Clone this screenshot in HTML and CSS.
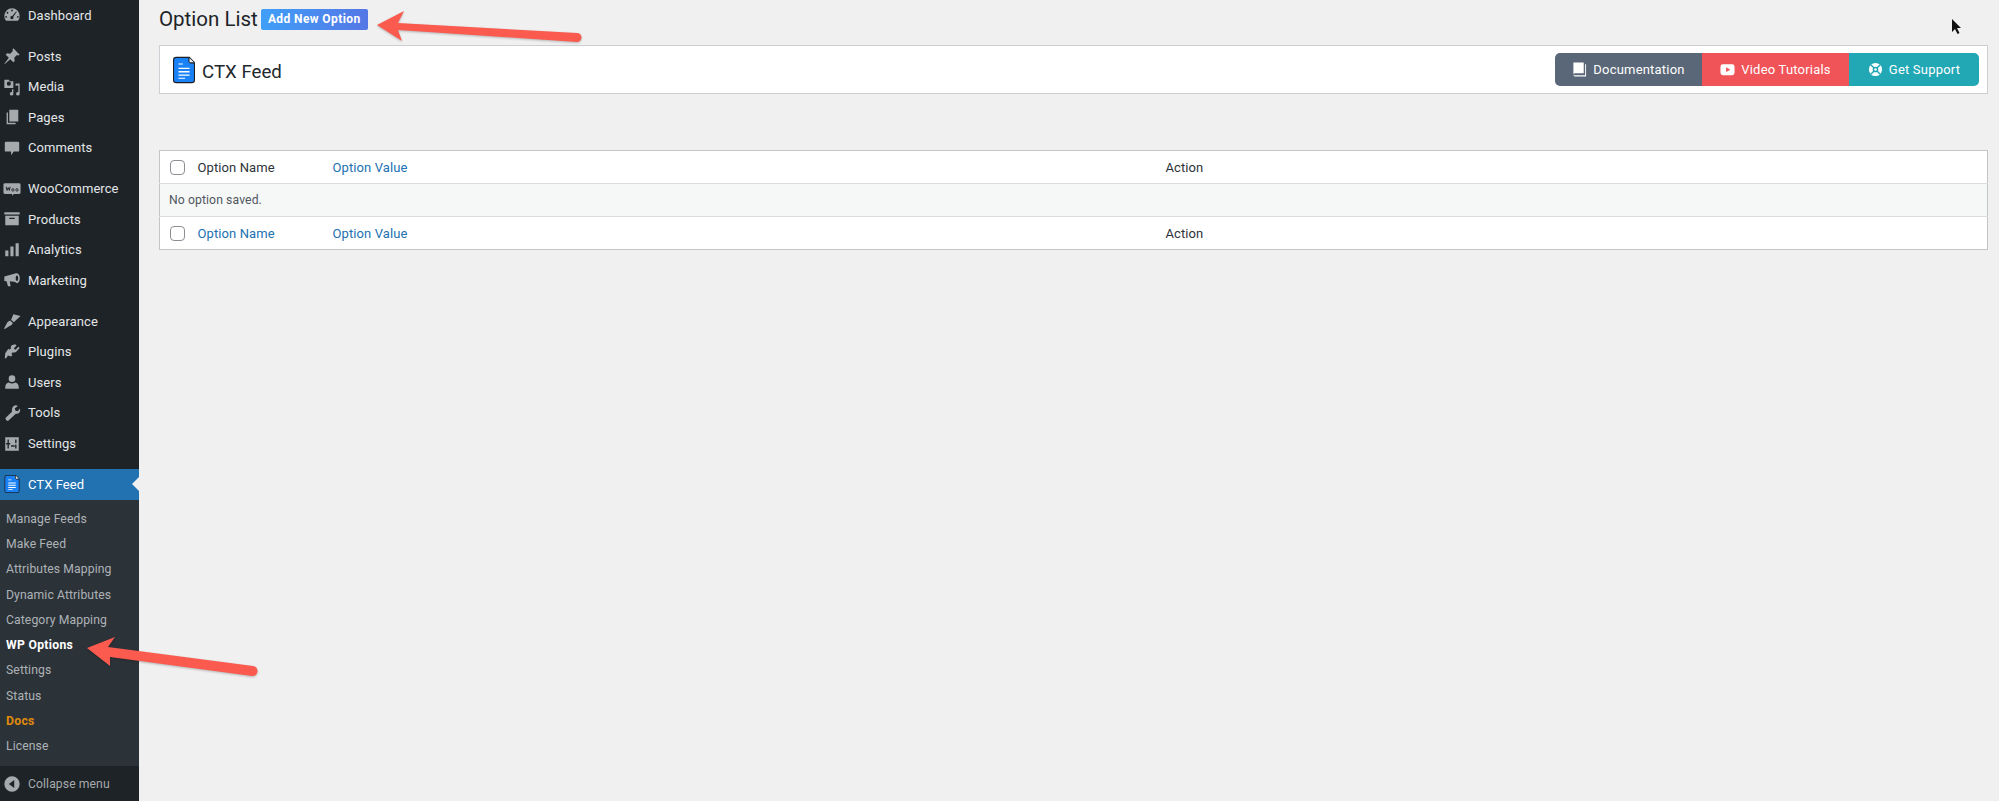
FILE: index.html
```html
<!DOCTYPE html>
<html lang="en">
<head>
<meta charset="utf-8">
<title>Option List</title>
<link rel="stylesheet" href="styles.css">
</head>
<body>
<div class="page">
  <nav class="sidebar">
    <ul class="menu">
      <li class="item"><svg class="ico" viewBox="0 0 20 20"><path fill-rule="evenodd" d="M10 2.500a8.500 8.500 0 0 0-8.500 8.500c0 2 .7 3.900 1.900 5.300h13.200A8.400 8.400 0 0 0 18.500 11 8.500 8.500 0 0 0 10 2.500zm0 1.500a1 1 0 1 1 0 2 1 1 0 0 1 0-2zM5 6.500a1 1 0 1 1 0 2 1 1 0 0 1 0-2zm9.500-.5.800.5-3.800 5.500a1.800 1.800 0 1 1-1.200-.9zM3.500 11a1 1 0 1 1 0 2 1 1 0 0 1 0-2zm13 0a1 1 0 1 1 0 2 1 1 0 0 1 0-2z"/></svg>Dashboard</li>
      <li class="item sep"><svg class="ico" viewBox="0 0 20 20"><path d="M11.500 1.500 18.500 8.500l-1.500 1-1.500-.5-3 3 .5 3.500-1.500 1.500-3.500-3.500L2 19l-.5-.5 5-6.500L3 8.500 4.500 7 8 7.500l3-3-.5-1.500z"/></svg>Posts</li>
      <li class="item"><svg class="ico" viewBox="0 0 20 20"><path fill-rule="evenodd" d="M1.500 2h5l1 1.500h4V11h-10zm5 2a2.300 2.300 0 1 0 0 4.600 2.300 2.300 0 0 0 0-4.600zM18.500 6v11.500a2 2 0 1 1-1.500-1.900V8l-3 .8V6zM11.500 12.500v5a2 2 0 1 1-1.500-1.900v-3.100z"/></svg>Media</li>
      <li class="item"><svg class="ico" viewBox="0 0 20 20"><path d="M7 2h10v13H7zM4 5h1.500v11.500H14V18H4z"/></svg>Pages</li>
      <li class="item"><svg class="ico" viewBox="0 0 20 20"><path d="M3 3h14a1 1 0 0 1 1 1v9a1 1 0 0 1-1 1h-5l-3 4v-4H3a1 1 0 0 1-1-1V4a1 1 0 0 1 1-1z"/></svg>Comments</li>
      <li class="item sep"><svg class="ico" viewBox="0 0 20 20"><path d="M2 3.500h16a1.500 1.500 0 0 1 1.500 1.500v9a1.500 1.500 0 0 1-1.500 1.500h-6l-1.500 2-.5-2H2A1.500 1.500 0 0 1 .5 14V5A1.500 1.500 0 0 1 2 3.500z"/><path class="woo-mark" d="M3.500 7.500l1 4 1.300-3 1.200 3 1-4M11 9.500a1.100 1.500 0 1 1-.01 0M15.500 9.500a1.100 1.500 0 1 1-.01 0"/></svg>WooCommerce</li>
      <li class="item"><svg class="ico" viewBox="0 0 20 20"><path fill-rule="evenodd" d="M1.500 2.500h17v2.500h-17zM2.500 6.500h15V17h-15zm4.500 2V10h6V8.500z"/></svg>Products</li>
      <li class="item"><svg class="ico" viewBox="0 0 20 20"><path d="M2.500 10.500h3.500V17H2.500zM8.200 6h3.500v11H8.200zM14 2.500h3.500V17H14z"/></svg>Analytics</li>
      <li class="item"><svg class="ico" viewBox="0 0 20 20"><path fill-rule="evenodd" d="M15.500 2.500c1.700 0 3.200 2.500 3.200 5.500s-1.500 5.500-3.200 5.500c-.7 0-1.500-.5-2-1.300L7.500 11.500l1 5.500H5.500L4 11.300 1.500 11V6l12-3.200c.5-.2 1.200-.3 2-.3zm0 2.500c-.8 0-1.400 1.300-1.400 3s.6 3 1.400 3 1.400-1.300 1.400-3-.6-3-1.400-3z"/></svg>Marketing</li>
      <li class="item sep"><svg class="ico" viewBox="0 0 20 20"><path d="M11.500 2.500l8 2-7.500 7-3-3zM8 9.500l3 3-1.500 2c-1 1.200-2 .5-3 1.500L2 19l-.8-.8 2.500-4.500c.8-1.300 1-2.200 1.800-2.900z"/></svg>Appearance</li>
      <li class="item"><svg class="ico" viewBox="0 0 20 20"><path d="M13.500 1.500l1.500 1.200-3 3.300 2 1.600 3-3.300 1.500 1.200-3.500 4c-1 1.200-2.800 1.500-4 .8l-1.800 2 1.300 1-1.500 1.700-3.500-1-2 3H2l.5-5.500L6 6.500l1.300 1 1.500-1.800c-.3-1.200 0-2.300.9-3.200z"/></svg>Plugins</li>
      <li class="item"><svg class="ico" viewBox="0 0 20 20"><path d="M10 2.500a3.700 3.700 0 0 1 3.700 3.800A3.700 3.700 0 0 1 10 10a3.700 3.700 0 0 1-3.700-3.700A3.700 3.700 0 0 1 10 2.500zM6.500 10.500c1 .8 2.200 1.200 3.500 1.200s2.500-.4 3.500-1.200c2.500.4 4 2.500 4 5.500v1.500h-15V16c0-3 1.500-5.100 4-5.500z"/></svg>Users</li>
      <li class="item"><svg class="ico" viewBox="0 0 20 20"><path d="M14 1.500c1 0 1.800.3 2.500.8L13 5l1 2.500 2.500.5 2.200-3c.5 1 .5 2.400 0 3.500-.8 1.700-2.700 2.700-4.500 2.300L6.500 18a2 2 0 0 1-3-.1 2 2 0 0 1-.2-2.900L10 8.500C9.500 5 11 1.800 14 1.500z"/></svg>Tools</li>
      <li class="item"><svg class="ico" viewBox="0 0 20 20"><path fill-rule="evenodd" d="M2.500 2.500h15v15h-15zM5 9h1.500V5H5zm1.500 6v-4.500H8V9H3.500v1.500H5V15zm7-4.500V15H15v-4.500zm0-1.500H15V5h-1.500zM9 13h4v-1.500H9z"/></svg>Settings</li>
      <li class="item sep active"><svg class="ico ctx" viewBox="0 0 20 24"><use href="#doc"/></svg>CTX Feed</li>
    </ul>
    <ul class="submenu">
      <li>Manage Feeds</li>
      <li>Make Feed</li>
      <li>Attributes Mapping</li>
      <li>Dynamic Attributes</li>
      <li>Category Mapping</li>
      <li class="current">WP Options</li>
      <li>Settings</li>
      <li>Status</li>
      <li class="docs">Docs</li>
      <li>License</li>
    </ul>
    <div class="collapse"><svg class="ico" viewBox="0 0 20 20"><path fill-rule="evenodd" d="M10 1.500a8.500 8.500 0 1 1 0 17 8.500 8.500 0 0 1 0-17zM12.500 5.500 6.500 10l6 4.500z"/></svg>Collapse menu</div>
  </nav>

  <main class="content">
    <header class="title-row">
      <h1>Option List</h1>
      <a class="add-btn">Add New Option</a>
    </header>

    <section class="brand-panel">
      <div class="brand">
        <svg class="brand-ico" viewBox="0 0 20 24"><defs><g id="doc"><path fill="#1d1f23" d="M3 0h12l5 5v16a3 3 0 0 1-3 3H3a3 3 0 0 1-3-3V3a3 3 0 0 1 3-3z"/><path fill="#1a82f7" d="M3 1h11v3.500L15.500 6H19v15a2 2 0 0 1-2 2H3a2 2 0 0 1-2-2V3a2 2 0 0 1 2-2z"/><path fill="#e8eef5" d="M15 1l4 4h-4z"/><path fill="#fff" d="M5 6h4v1H5zM5 10h10v1.200H5zM5 13h10v1.200H5zM5 16h10v1.200H5zM5 19h6v1H5z"/></g></defs><use href="#doc"/></svg>
        <span>CTX Feed</span>
      </div>
      <div class="btn-group">
        <a class="seg seg-doc"><svg class="seg-ico" viewBox="0 0 16 16"><path d="M1.500 .5h11v11.500H3.500a2 2 0 0 0-2 1.500zM14 2.500h1V15.500H3.500a2 2 0 0 1-2-1.500H14z"/></svg>Documentation</a>
        <a class="seg seg-video"><svg class="seg-ico" viewBox="0 0 16 16"><path fill-rule="evenodd" d="M3 2.500h10a2.500 2.500 0 0 1 2.500 2.500v6.500A2.500 2.500 0 0 1 13 14H3a2.500 2.500 0 0 1-2.500-2.500V5A2.500 2.500 0 0 1 3 2.500zM6.500 5.700v5L11 8.200z"/></svg>Video Tutorials</a>
        <a class="seg seg-support"><svg class="seg-ico" viewBox="0 0 16 16"><circle cx="8" cy="8" r="7"/><path class="ring-gap" d="M3 3l10 10M13 3 3 13"/><circle class="ring-hole" cx="8" cy="8" r="3"/><circle cx="8" cy="8" r="1.300"/></svg>Get Support</a>
      </div>
    </section>

    <table class="options">
      <thead>
        <tr>
          <td class="c-check"><span class="checkbox"></span></td>
          <th class="c-name">Option Name</th>
          <th class="c-value link">Option Value</th>
          <th>Action</th>
        </tr>
      </thead>
      <tbody>
        <tr class="empty"><td colspan="4">No option saved.</td></tr>
      </tbody>
      <tfoot>
        <tr>
          <td class="c-check"><span class="checkbox"></span></td>
          <th class="c-name link">Option Name</th>
          <th class="c-value link">Option Value</th>
          <th>Action</th>
        </tr>
      </tfoot>
    </table>
  </main>

  <svg class="arrow arrow-top" viewBox="0 0 215 40"><path d="M3 15 30 1 24 13 203 23a4.500 4.500 0 0 1 0 9L24 20 28 31z"/></svg>
  <svg class="arrow arrow-side" viewBox="0 0 180 45"><path d="M3 12 31 1 24 11 169 30a5 5 0 0 1-1 10L26 21 26 30z"/></svg>
  <svg class="cursor" viewBox="0 0 10 16"><path d="M1 0v13l3-3 2.500 5 2-1L6 9h4z"/></svg>
</div>
</body>
</html>
```
FILE: styles.css
```css
* { box-sizing: border-box; }
html, body { margin: 0; padding: 0; }
body { background: #f0f0f1; font-family: Roboto, "Liberation Sans", sans-serif; color: #1d2327; }
.page { position: relative; display: flex; width: 1999px; height: 801px; overflow: hidden; background: #f0f0f1; }

.sidebar { flex: 0 0 139px; height: 801px; background: #1d2327; color: #e4e6e7; display: flex; flex-direction: column; font-size: 13px; letter-spacing: .08px; }
.menu, .submenu { list-style: none; margin: 0; padding: 0; }
.item { display: flex; align-items: center; height: 30.6px; padding-left: 3px; gap: 7px; }
.item.sep { margin-top: 10.2px; }
.ico { width: 18px; height: 18px; fill: #a7aaad; flex: none; }
.woo-mark { fill: none; stroke: #1d2327; stroke-width: 1.100; }
.item.active { background: #2271b1; color: #fff; position: relative; }
.item.active::after { content: ""; position: absolute; right: 0; top: 8px; border: 7px solid transparent; border-right-color: #f0f0f1; border-left: 0; }

.submenu { background: #2c3338; padding: 7px 0 6.5px; flex: none; }
.submenu li { height: 25.300px; line-height: 25.300px; padding-left: 6px; font-size: 12.200px; letter-spacing: .1px; color: #adb2b7; }
.submenu .current { color: #fff; font-weight: 700; letter-spacing: .3px; }
.submenu .docs { color: #e08a0b; font-weight: 700; letter-spacing: .3px; }
.collapse { flex: 1; display: flex; align-items: center; gap: 7px; padding-left: 3px; font-size: 12.200px; color: #a7aaad; }

.content { flex: 1; min-width: 0; padding: 7px 11px 0 20px; }
.title-row { display: flex; align-items: center; gap: 3px; height: 24px; margin-bottom: 14px; }
h1 { margin: 0; font-size: 20.500px; font-weight: 400; color: #1d2327; }
.add-btn { display: inline-flex; align-items: center; justify-content: center; width: 107px; height: 21px; border-radius: 2px; background: linear-gradient(90deg, #3f9ff8, #5577e6); color: #fff; font-size: 12px; font-weight: 700; letter-spacing: .4px; }

.brand-panel { display: flex; align-items: center; justify-content: space-between; height: 49px; padding: 0 8px 0 13px; background: #fff; border: 1px solid #ccd0d4; }
.brand { display: flex; align-items: center; gap: 7px; font-size: 18.700px; color: #23282d; }
.brand span { padding-top: 4px; }
.brand-ico { width: 22px; height: 28px; }
.btn-group { display: flex; height: 33px; border-radius: 5px; overflow: hidden; }
.seg { display: flex; align-items: center; justify-content: center; gap: 6px; padding-bottom: 1px; color: #fff; font-size: 13px; letter-spacing: .2px; }
.seg-ico { width: 15px; height: 15px; fill: #fff; flex: none; }
.seg-doc { width: 147px; background: #5a6778; }
.seg-video { width: 147px; background: #f05459; }
.seg-support { width: 130px; background: #22a7b5; }
.ring-gap { fill: none; stroke: #22a7b5; stroke-width: 1.600; }
.seg-ico .ring-hole { fill: #22a7b5; }

.options { width: 100%; margin-top: 56px; border-collapse: collapse; background: #fff; border: 1px solid #c3c4c7; font-size: 13px; letter-spacing: .1px; table-layout: fixed; }
.options th, .options td { height: 33px; padding: 0; font-weight: 400; text-align: left; color: #2c3338; }
.options thead tr { border-bottom: 1px solid #dcdcde; }
.options tfoot tr { border-top: 1px solid #dcdcde; }
.options .c-check { width: 38px; padding-left: 10px; }
.c-name { width: 135px; }
.c-value { width: 833px; }
.options .link { color: #2271b1; }
.checkbox { display: block; width: 15px; height: 15px; background: #fff; border: 1px solid #8c8f94; border-radius: 4px; }
.options .empty td { background: #f6f7f7; padding-left: 9px; font-size: 12.200px; color: #50575e; }

.arrow { position: absolute; fill: #fb5a4e; filter: drop-shadow(0 1px 1px rgba(0,0,0,.25)); }
.arrow-top { left: 374px; top: 10px; width: 215px; height: 40px; }
.arrow-side { left: 84px; top: 636px; width: 180px; height: 45px; }
.cursor { position: absolute; left: 1951px; top: 19px; width: 10px; height: 16px; fill: #111; }
```
